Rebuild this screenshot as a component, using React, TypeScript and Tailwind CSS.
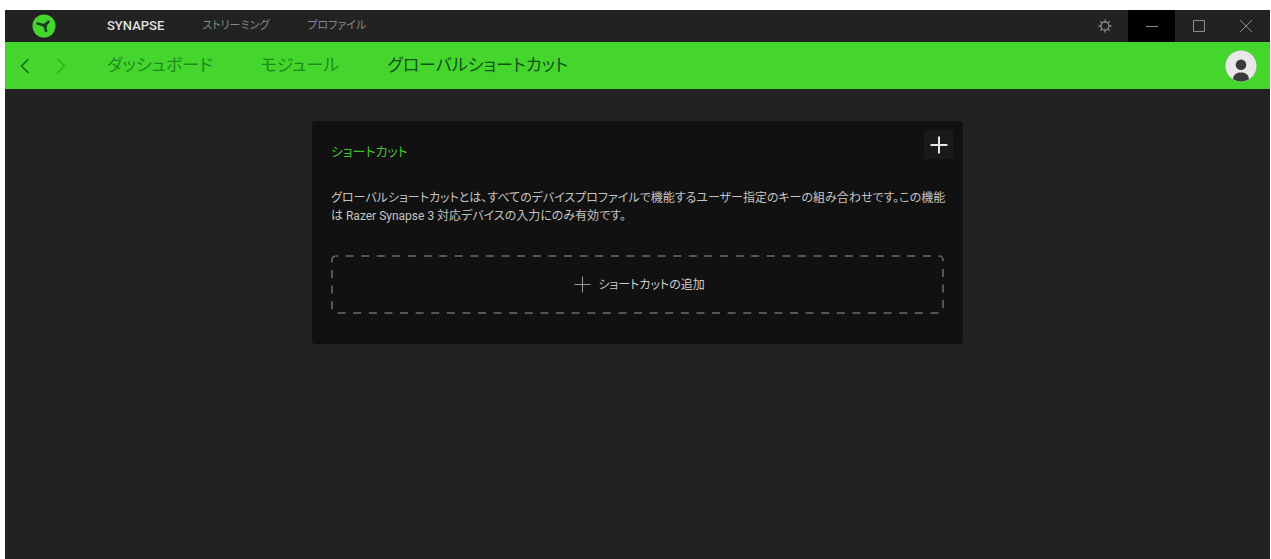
import { ReactNode, useState } from 'react'

const FONT =
	'font-[Roboto,"Noto_Sans_CJK_JP",sans-serif] [font-feature-settings:"palt"]'

const TOP_TABS = ['SYNAPSE', 'ストリーミング', 'プロファイル']
const SUB_TABS = ['ダッシュボード', 'モジュール', 'グローバルショートカット']

const Logo = () => (
	<svg viewBox="0 0 24 24" className="size-6" aria-hidden="true">
		<circle cx="12" cy="12" r="11.5" fill="#44d62c" />
		<path
			d="M5.500 9.600l6 1.600M12.500 11.500l4-3.800M13 12l1 5"
			fill="none"
			stroke="#14401a"
			strokeWidth="2.600"
			strokeLinecap="round"
		/>
		<circle cx="13" cy="11.500" r="2.200" fill="#14401a" />
	</svg>
)

const PlusIcon = ({ className }: { className: string }) => (
	<svg viewBox="0 0 18 18" className={className} fill="none" stroke="currentColor" aria-hidden="true">
		<path d="M9 0.500v17M0.500 9h17" />
	</svg>
)

const WindowButton = ({
	label,
	active,
	children
}: {
	label: string
	active?: boolean
	children: ReactNode
}) => (
	<button
		aria-label={label}
		className={`flex w-[47px] items-center justify-center text-[#8c8c8c] ${active ? 'bg-black' : ''}`}
	>
		<svg viewBox="0 0 14 14" className="size-[14px]" fill="none" stroke="currentColor" aria-hidden="true">
			{children}
		</svg>
	</button>
)

const TitleBar = () => {
	const [tab, setTab] = useState(0)

	return (
		<header className="flex h-8 bg-[#222222]">
			<div className="flex w-[102px] items-center pl-[27px]">
				<Logo />
			</div>
			<nav className="flex items-center gap-[38px] text-[13px]">
				{TOP_TABS.map((name, i) => (
					<button
						key={name}
						onClick={() => setTab(i)}
						className={i === tab ? 'font-medium text-[#e0e0e0]' : 'text-[11px] text-[#8a8a8a]'}
					>
						{name}
					</button>
				))}
			</nav>
			<div className="ml-auto flex pr-px">
				<WindowButton label="設定">
					<circle cx="7" cy="7" r="4" strokeWidth="1.300" />
					<path
						d="M7 0.500v2M7 11.500v2M0.500 7h2M11.500 7h2M2.400 2.400l1.400 1.400M10.200 10.200l1.400 1.400M2.400 11.600l1.400-1.400M10.200 3.800l1.400-1.400"
						strokeWidth="1.300"
					/>
				</WindowButton>
				<WindowButton label="最小化" active>
					<path d="M1 7.500h12" />
				</WindowButton>
				<WindowButton label="最大化">
					<path d="M1.500 1.500h11v11h-11z" />
				</WindowButton>
				<WindowButton label="閉じる">
					<path d="M1 1l12 12M13 1L1 13" />
				</WindowButton>
			</div>
		</header>
	)
}

const SubBar = () => {
	const [tab, setTab] = useState(2)

	return (
		<div className="flex h-[47px] items-center bg-[#44d62c]">
			<div className="flex w-[102px] gap-6 pl-[14px]">
				<button aria-label="戻る" className="text-[#14691a]">
					<svg viewBox="0 0 12 16" className="h-4 w-3" fill="none" stroke="currentColor" strokeWidth="1.600">
						<path d="M9.500 1L2.500 8l7 7" />
					</svg>
				</button>
				<button aria-label="進む" className="text-[#2fae24]">
					<svg viewBox="0 0 12 16" className="h-4 w-3" fill="none" stroke="currentColor" strokeWidth="1.200">
						<path d="M2.500 1l7 7-7 7" />
					</svg>
				</button>
			</div>
			<nav className="flex gap-12 text-[17px]">
				{SUB_TABS.map((name, i) => (
					<button
						key={name}
						onClick={() => setTab(i)}
						className={i === tab ? 'text-[#10501a]' : 'text-[#1f8a20]'}
					>
						{name}
					</button>
				))}
			</nav>
			<button aria-label="アカウント" className="mr-[13px] ml-auto">
				<svg viewBox="0 0 32 32" className="size-8" aria-hidden="true">
					<circle cx="16" cy="16" r="15.500" fill="#e8e6e8" />
					<circle cx="16" cy="14.800" r="5.300" fill="#3a3a3c" />
					<path d="M8 29.200c.4-4.800 4-6.600 8-6.600s7.600 1.800 8 6.600a15.500 15.500 0 0 1-16 0z" fill="#3a3a3c" />
				</svg>
			</button>
		</div>
	)
}

const ShortcutCard = () => (
	<section className="mx-auto w-full max-w-[651px] rounded-sm bg-[#111111] px-[19px] pt-[9px] pb-[30px]">
		<div className="flex items-start justify-between">
			<h1 className="pt-3 text-[13px] leading-5 text-[#44c232]">ショートカット</h1>
			<button
				aria-label="追加"
				className="-mr-[9px] flex size-[29px] items-center justify-center bg-[#191919] text-[#e4e4e4]"
			>
				<PlusIcon className="size-[18px] stroke-2" />
			</button>
		</div>
		<p className="-mr-2 mt-[27px] text-[12px] leading-[18px] text-[#c4c4c4]">
			グローバルショートカットとは、すべてのデバイスプロファイルで機能するユーザー指定のキーの組み合わせです。この機能は
			Razer Synapse 3 対応デバイスの入力にのみ有効です。
		</p>
		<button className="relative mt-[30px] flex h-[59px] w-full items-center justify-center gap-[7px] pl-1 text-[12px] text-[#cccccc]">
			{/* dashes are longer than the ones border-dashed gives */}
			<svg className="absolute inset-0 size-full" fill="none" aria-hidden="true">
				<rect
					x="1"
					y="1"
					rx="4"
					className="h-[calc(100%-2px)] w-[calc(100%-2px)]"
					stroke="#6c6c6c"
					strokeWidth="1.500"
					strokeDasharray="8 7.600"
					strokeDashoffset="6"
				/>
			</svg>
			<PlusIcon className="size-[17px] text-[#a0a0a0]" />
			ショートカットの追加
		</button>
	</section>
)

export default function App() {
	return (
		<div className={`flex min-h-screen flex-col bg-white pt-[10px] pr-px pl-[5px] ${FONT}`}>
			<TitleBar />
			<SubBar />
			<main className="flex-1 bg-[#222222] px-6 pt-8">
				<ShortcutCard />
			</main>
		</div>
	)
}
